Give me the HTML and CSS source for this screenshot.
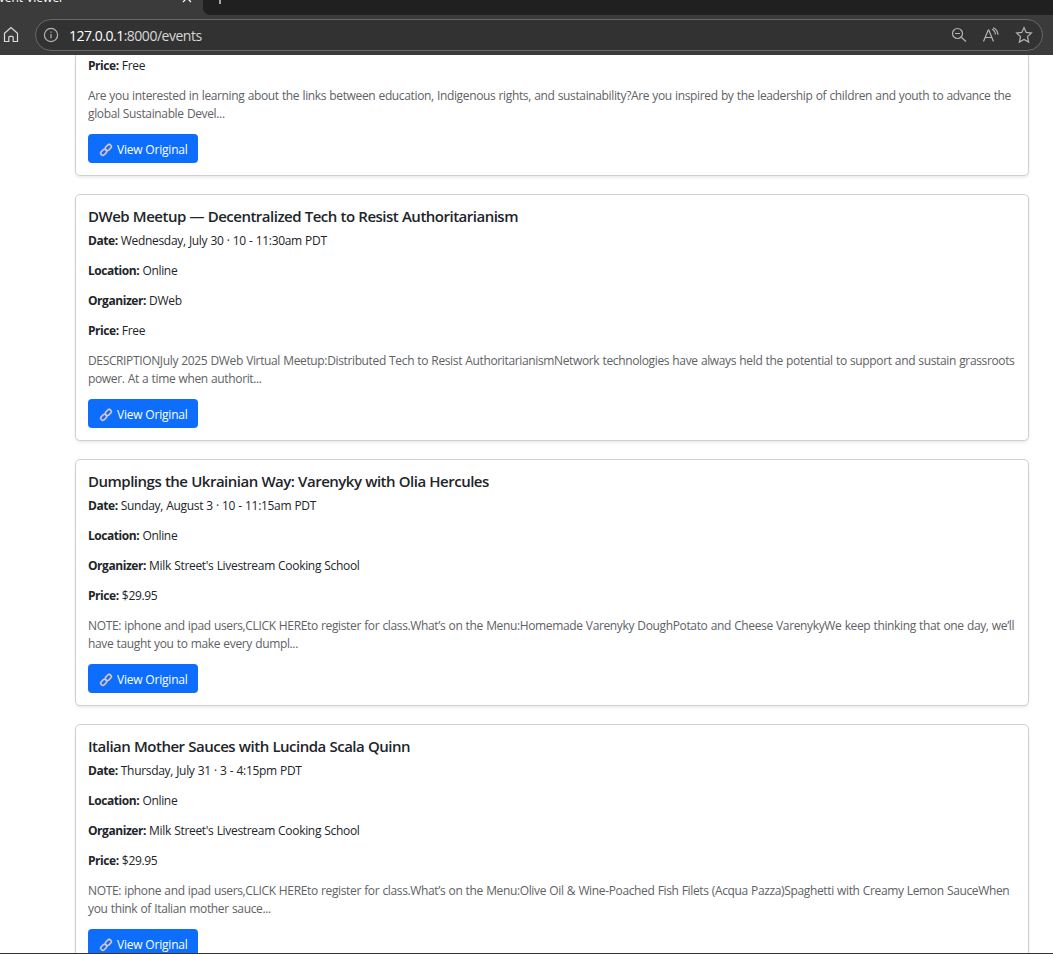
FILE: index.html
```html
<!DOCTYPE html>
<html lang="en">
<head>
<meta charset="utf-8">
<title>Event Viewer</title>
<link rel="stylesheet" href="styles.css">
</head>
<body>
<svg class="defs" aria-hidden="true"><symbol id="link" viewBox="0 0 14 14"><g fill="none" stroke-linecap="round"><g stroke="#8f93b5" stroke-width="2"><rect x="6" y="2.4" width="6.6" height="4.2" rx="2.1" transform="rotate(-45 9.3 4.5)"/><rect x="1.4" y="7.2" width="6.6" height="4.2" rx="2.1" transform="rotate(-45 4.7 9.3)"/></g><g stroke="#d5cfdd" stroke-width="1.1"><rect x="6" y="2.4" width="6.6" height="4.2" rx="2.1" transform="rotate(-45 9.3 4.5)"/><rect x="1.4" y="7.2" width="6.6" height="4.2" rx="2.1" transform="rotate(-45 4.7 9.3)"/></g></g></symbol></svg>
<div class="window">
<header class="browser">
  <div class="tabs">
    <div class="tab"><span class="tab-title">Event Viewer</span><svg class="tab-close" width="10" height="10" viewBox="0 0 10 10"><path d="M1 1l8 8M9 1L1 9"/></svg></div>
    <div class="strip"><svg class="plus" width="12" height="12" viewBox="0 0 12 12"><path d="M6 0v12M0 6h12"/></svg></div>
  </div>
  <div class="toolbar">
    <svg class="home" width="16" height="18" viewBox="0 0 16 18"><path d="M1.5 7.3L8 1.5l6.500 5.800V15.500H10.200V11.300q0-1-1-1H6.800q-1 0-1 1v4.200H1.500z"/></svg>
    <div class="address">
      <svg class="info" width="16" height="16" viewBox="0 0 16 16"><circle cx="8" cy="8" r="6.600"/><path d="M8 7v4.200M8 4.500v1.300"/></svg>
      <span class="url"><b>127.0.0.1</b>:8000/events</span>
      <svg class="tool" width="16" height="16" viewBox="0 0 16 16"><circle cx="6.500" cy="6.500" r="5"/><path d="M4 6.500h5M10.200 10.200l4.800 4.300"/></svg>
      <svg class="tool" width="18" height="16" viewBox="0 0 18 16"><path d="M1.500 14.500L6.200 3h.6l4.700 11.500M3.200 10.500h6.600M10 2.200q3 1 3.500 5.300M11 .8q4.500 1.400 5 7"/></svg>
      <svg class="tool" width="18" height="18" viewBox="0 0 18 18"><path d="M9 1.600l2.200 4.800 5.200.6-3.900 3.600 1.100 5.400L9 13.400 4.400 16l1.100-5.400L1.600 7l5.200-.6z"/></svg>
    </div>
  </div>
</header>
<main class="page">
  <article class="card card-cut">
    <p class="field"><strong>Price:</strong> Free</p>
    <p class="description">Are you interested in learning about the links between education, Indigenous rights, and sustainability?Are you inspired by the leadership of children and youth to advance the<br>global Sustainable Devel...</p>
    <a class="button"><svg width="14" height="14"><use href="#link"/></svg><span>View Original</span></a>
  </article>
  <article class="card">
    <h5 class="title">DWeb Meetup — Decentralized Tech to Resist Authoritarianism</h5>
    <p class="field"><strong>Date:</strong> Wednesday, July 30 · 10 - 11:30am PDT</p>
    <p class="field"><strong>Location:</strong> Online</p>
    <p class="field"><strong>Organizer:</strong> DWeb</p>
    <p class="field"><strong>Price:</strong> Free</p>
    <p class="description">DESCRIPTIONJuly 2025 DWeb Virtual Meetup:Distributed Tech to Resist AuthoritarianismNetwork technologies have always held the potential to support and sustain grassroots<br>power. At a time when authorit...</p>
    <a class="button"><svg width="14" height="14"><use href="#link"/></svg><span>View Original</span></a>
  </article>
  <article class="card">
    <h5 class="title">Dumplings the Ukrainian Way: Varenyky with Olia Hercules</h5>
    <p class="field"><strong>Date:</strong> Sunday, August 3 · 10 - 11:15am PDT</p>
    <p class="field"><strong>Location:</strong> Online</p>
    <p class="field"><strong>Organizer:</strong> Milk Street's Livestream Cooking School</p>
    <p class="field"><strong>Price:</strong> $29.95</p>
    <p class="description">NOTE: iphone and ipad users,CLICK HEREto register for class.What’s on the Menu:Homemade Varenyky DoughPotato and Cheese VarenykyWe keep thinking that one day, we’ll<br>have taught you to make every dumpl...</p>
    <a class="button"><svg width="14" height="14"><use href="#link"/></svg><span>View Original</span></a>
  </article>
  <article class="card">
    <h5 class="title">Italian Mother Sauces with Lucinda Scala Quinn</h5>
    <p class="field"><strong>Date:</strong> Thursday, July 31 · 3 - 4:15pm PDT</p>
    <p class="field"><strong>Location:</strong> Online</p>
    <p class="field"><strong>Organizer:</strong> Milk Street's Livestream Cooking School</p>
    <p class="field"><strong>Price:</strong> $29.95</p>
    <p class="description">NOTE: iphone and ipad users,CLICK HEREto register for class.What’s on the Menu:Olive Oil &amp; Wine-Poached Fish Filets (Acqua Pazza)Spaghetti with Creamy Lemon SauceWhen<br>you think of Italian mother sauce...</p>
    <a class="button"><svg width="14" height="14"><use href="#link"/></svg><span>View Original</span></a>
  </article>
</main>
</div>
</body>
</html>
```
FILE: styles.css
```css
* { box-sizing: border-box; }
body { margin: 0; font: 12px/18px "Open Sans", "Noto Sans", sans-serif; color: #212529; background: #fff; overflow: hidden; }
.defs { display: none; }
.window { height: 954px; display: flex; flex-direction: column; overflow: hidden; border-bottom: 1px solid #333; }
.browser { flex: none; height: 55px; background: #3b3b3b; color: #fff; }
.browser path, .browser circle { fill: none; stroke: currentColor; stroke-width: 1.2; }
.tabs { height: 15px; display: flex; overflow: hidden; }
.tab { width: 203px; display: flex; justify-content: space-between; padding-right: 11px; }
.tab-title { font-size: 12px; line-height: 16px; margin: -10px 0 0 -8px; letter-spacing: 0; }
.tab-close { margin-top: -7px; }
.strip { flex: 1; background: #202020; border-bottom-left-radius: 7px; }
.plus { display: block; margin: -8px 0 0 11px; }
.toolbar { height: 40px; display: flex; align-items: center; padding: 0 10px 0 3px; }
.home { margin-right: 16px; color: #ddd; }
.address { flex: 1; height: 32px; display: flex; align-items: center; gap: 15px; border: 1px solid #686868; border-radius: 16px; background: #323232; padding: 0 9px 0 7px; color: #b5b5b5; }
.url { flex: 1; margin-left: -5px; padding-top: 1px; font-size: 14px; color: #d8d8d8; letter-spacing: -.49px; }
.url b { font-weight: 400; color: #fff; }
.page { flex: 1; min-height: 0; overflow: hidden; padding: 0 24px 0 75px; }
.card { height: 247px; margin-bottom: 18px; padding: 12px; border: 1px solid #ced0d2; border-radius: 5px; background: #fff; box-shadow: 0 2px 3px rgba(0, 0, 0, .075); }
.card-cut { height: 121px; border-top: 0; border-radius: 0 0 5px 5px; padding-top: 2px; }
.title { margin: 0 0 7px; font-size: 15px; line-height: 18px; font-weight: 600; letter-spacing: -.5px; word-spacing: .3px; white-space: nowrap; }
.field { margin: 0 0 12px; letter-spacing: -.32px; word-spacing: .4px; }
.field strong { font-weight: 700; letter-spacing: -.45px; }
.description { margin: 0 0 11px; color: #5e6265; letter-spacing: -.36px; word-spacing: .46px; white-space: nowrap; }
.button { width: 110px; height: 29px; display: flex; align-items: center; gap: 4px; padding: 2px 0 0 11px; border-radius: 4px; background: #0d6efd; color: #fff; letter-spacing: -.2px; white-space: nowrap; }
```
